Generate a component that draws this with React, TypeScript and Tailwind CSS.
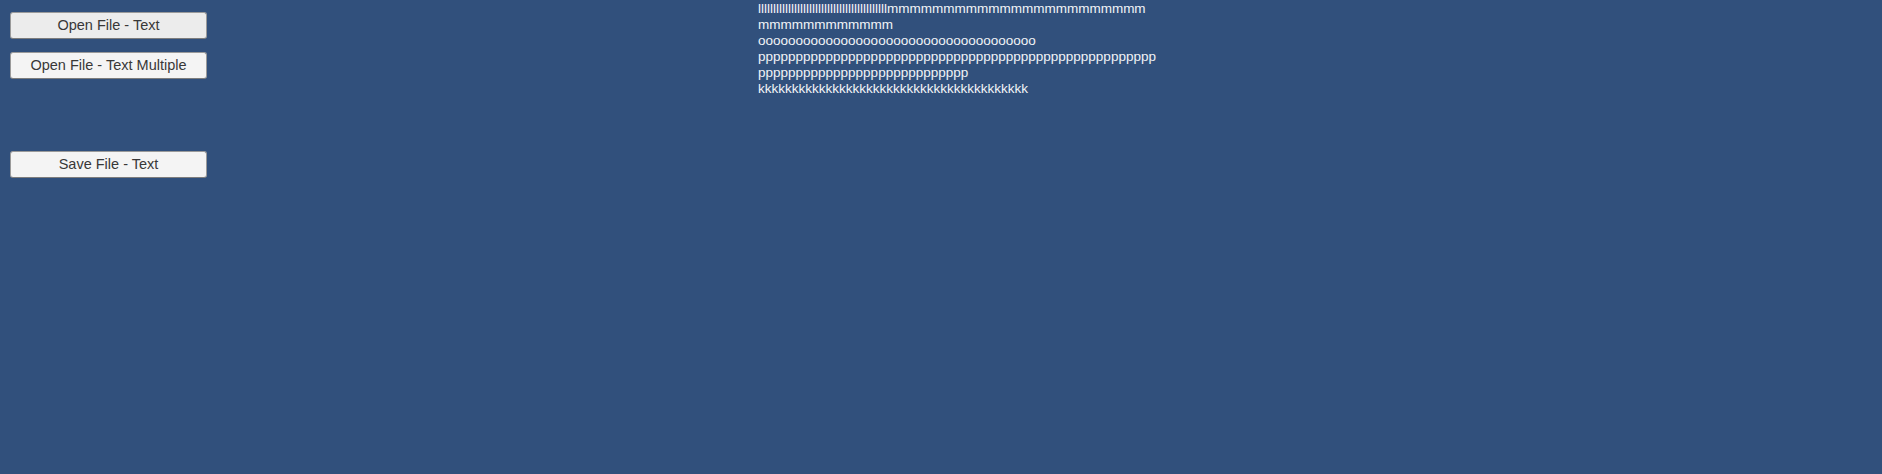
const L = "l".repeat(43);
const lines = [
  L + "m".repeat(23),
  "m".repeat(12),
  "o".repeat(37),
  "p".repeat(53),
  "p".repeat(28),
  "k".repeat(40),
];

const FileButton = ({ label, active }: { label: string; active?: boolean }) => (
  <button
    className={`h-[27px] w-[197px] rounded-[3px] border border-[#9a9a9a] border-b-[#7d7d7d] text-[14.5px] text-[#383838] ${
      active ? "bg-[#ececec]" : "bg-[#f4f4f4]"
    }`}
  >
    {label}
  </button>
);

export default function App() {
  return (
    <div className="flex h-[474px] w-[1882px] bg-[#31507c] font-['Liberation_Sans',Arial,sans-serif]">
      {/* Buttons */}
      <div className="flex w-[758px] shrink-0 flex-col pl-[10px] pt-[12px]">
        <FileButton label="Open File - Text" active />
        <div className="mt-[13px]">
          <FileButton label="Open File - Text Multiple" />
        </div>
        <div className="mt-[72px]">
          <FileButton label="Save File - Text" />
        </div>
      </div>

      {/* File contents */}
      <div className="whitespace-pre pt-[1px] text-[13.5px] leading-[16px] text-[#f2f4f7]">
        {lines.map((line, i) => (
          <div key={i}>{line}</div>
        ))}
      </div>
    </div>
  );
}
